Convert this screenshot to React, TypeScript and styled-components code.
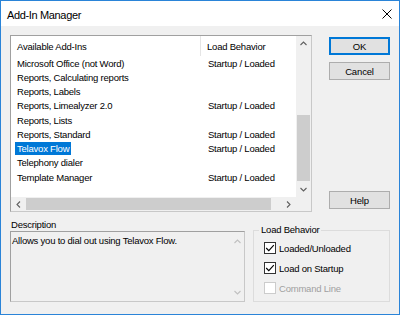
import styled, { createGlobalStyle } from "styled-components";

const GlobalStyle = createGlobalStyle`
  html, body {
    margin: 0;
    padding: 0;
    background: #ffffff;
  }
  * {
    box-sizing: border-box;
  }
`;

const Window = styled.div`
  width: 400px;
  height: 315px;
  border: 1px solid #2a84d8;
  display: flex;
  flex-direction: column;
  font-family: "Liberation Sans", Arial, sans-serif;
  font-size: 9.5px;
  letter-spacing: -0.22px;
  color: #000;
  background: #f0f0f0;
`;

const TitleBar = styled.div`
  height: 25px;
  flex: none;
  background: #ffffff;
  display: flex;
  align-items: center;
  justify-content: space-between;
  padding: 0 7px 0 6px;
`;

const Title = styled.span`
  font-size: 11px;
  letter-spacing: -0.35px;
  padding-top: 2px;
`;

const Body = styled.div`
  flex: 1;
  display: flex;
  flex-direction: column;
  padding: 9px 9px 12px 9px;
`;

const TopRow = styled.div`
  display: flex;
  gap: 17px;
  height: 177px;
`;

const ListBox = styled.div`
  width: 302px;
  height: 177px;
  background: #ffffff;
  border-top: 1px solid #a0a0a0;
  border-left: 1px solid #a0a0a0;
  border-right: 1px solid #c8c8c8;
  border-bottom: 1px solid #c8c8c8;
  display: grid;
  grid-template-columns: 1fr 15px;
  grid-template-rows: 1fr 14px;
`;

const ListContent = styled.div`
  overflow: hidden;
`;

const HeaderRow = styled.div`
  height: 20px;
  display: grid;
  grid-template-columns: 190px 1fr;
`;

const HeaderCell = styled.div<{ $divider?: boolean }>`
  display: flex;
  align-items: center;
  padding-left: 6px;
  border-right: ${(p) => (p.$divider ? "1px solid #e5e5e5" : "none")};
`;

const Row = styled.div`
  height: 14.25px;
  display: grid;
  grid-template-columns: 190px 1fr;
  align-items: center;
`;

const NameCell = styled.div`
  padding-left: 4px;
  white-space: nowrap;
`;

const NameText = styled.span<{ $selected?: boolean }>`
  display: inline-block;
  padding: 0 2px;
  line-height: 13px;
  background: ${(p) => (p.$selected ? "#0078d7" : "transparent")};
  color: ${(p) => (p.$selected ? "#ffffff" : "#000000")};
`;

const BehaviorCell = styled.div`
  padding-left: 7px;
  white-space: nowrap;
`;

const VScroll = styled.div`
  display: flex;
  flex-direction: column;
  background: #f0f0f0;
`;

const HScroll = styled.div`
  display: flex;
  background: #f0f0f0;
`;

const Corner = styled.div`
  background: #f0f0f0;
`;

const ArrowBox = styled.div<{ $horizontal?: boolean }>`
  flex: none;
  width: ${(p) => (p.$horizontal ? "15px" : "100%")};
  height: ${(p) => (p.$horizontal ? "100%" : "15px")};
  display: flex;
  align-items: center;
  justify-content: center;
`;

const Track = styled.div<{ $horizontal?: boolean }>`
  flex: 1;
  display: flex;
  flex-direction: ${(p) => (p.$horizontal ? "row" : "column")};
`;

const Thumb = styled.div<{ $horizontal?: boolean; $offset: number; $size: number }>`
  background: #cdcdcd;
  flex: none;
  ${(p) =>
    p.$horizontal
      ? `width: ${p.$size}px; margin-left: ${p.$offset}px; margin-top: 1px; margin-bottom: 1px;`
      : `height: ${p.$size}px; margin-top: ${p.$offset}px; margin-left: 1px; margin-right: 1px;`}
`;

const ButtonColumn = styled.div`
  width: 61px;
  display: flex;
  flex-direction: column;
  gap: 7px;
  padding: 2px 0 3px;
`;

const Button = styled.button<{ $default?: boolean }>`
  height: 18px;
  width: 100%;
  padding: 0;
  font-family: "Liberation Sans", Arial, sans-serif;
  font-size: 9.5px;
  letter-spacing: -0.15px;
  color: #000;
  background: #e1e1e1;
  border: 1px solid ${(p) => (p.$default ? "#0078d7" : "#adadad")};
  box-shadow: ${(p) => (p.$default ? "inset 0 0 0 1px #0078d7" : "none")};
`;

const Spacer = styled.div`
  flex: 1;
`;

const BottomRow = styled.div`
  display: flex;
  gap: 8px;
  margin-top: 7px;
  flex: 1;
`;

const DescriptionBlock = styled.div`
  width: 235px;
  display: flex;
  flex-direction: column;
`;

const SectionLabel = styled.div`
  height: 12px;
  line-height: 12px;
  padding-left: 1px;
`;

const DescriptionBox = styled.div`
  flex: 1;
  display: flex;
  background: #f0f0f0;
  border-top: 1px solid #a0a0a0;
  border-left: 1px solid #a0a0a0;
  border-right: 1px solid #c8c8c8;
  border-bottom: 1px solid #c8c8c8;
`;

const DescriptionText = styled.div`
  flex: 1;
  padding: 3px 1px;
  line-height: 11px;
`;

const DescScroll = styled.div`
  width: 14px;
  display: flex;
  flex-direction: column;
  justify-content: space-between;
  padding: 2px 0 1px;
`;

const GroupBox = styled.fieldset`
  flex: 1;
  min-width: 0;
  margin: 5px 0 0;
  padding: 2px 0 0 10px;
  border: 1px solid #dcdcdc;
`;

const Legend = styled.legend`
  margin-left: -5px;
  padding: 0 2px;
  line-height: 12px;
`;

const CheckRow = styled.label<{ $disabled?: boolean }>`
  height: 20px;
  display: flex;
  align-items: center;
  gap: 3px;
  color: ${(p) => (p.$disabled ? "#a0a0a0" : "#000")};
`;

const CheckBox = styled.span<{ $disabled?: boolean }>`
  width: 12px;
  height: 12px;
  flex: none;
  display: flex;
  align-items: center;
  justify-content: center;
  background: #ffffff;
  border: 1px solid ${(p) => (p.$disabled ? "#cccccc" : "#333333")};
`;

type Dir = "up" | "down" | "left" | "right";

const arrowPoints: Record<Dir, string> = {
  up: "0.5,4 3.5,1 6.5,4",
  down: "0.5,1 3.5,4 6.5,1",
  left: "4,0.5 1,3.5 4,6.5",
  right: "1,0.5 4,3.5 1,6.5",
};

const Arrow = ({ dir, muted }: { dir: Dir; muted?: boolean }) => {
  const vertical = dir === "up" || dir === "down";
  return (
    <svg width={vertical ? 7 : 5} height={vertical ? 5 : 7} viewBox={vertical ? "0 0 7 5" : "0 0 5 7"}>
      <polyline
        points={arrowPoints[dir]}
        fill="none"
        stroke={muted ? "#c0c0c0" : "#606060"}
        strokeWidth="1.1"
      />
    </svg>
  );
};

const CloseIcon = () => (
  <svg width="10" height="10" viewBox="0 0 10 10">
    <path d="M0.5 0.5 L9.5 9.5 M9.5 0.5 L0.5 9.5" stroke="#000" strokeWidth="1" />
  </svg>
);

const CheckMark = () => (
  <svg width="10" height="10" viewBox="0 0 10 10">
    <polyline points="1.2,5 3.8,7.6 8.8,2.2" fill="none" stroke="#000" strokeWidth="1.1" />
  </svg>
);

const addIns = [
  { name: "Microsoft Office (not Word)", behavior: "Startup / Loaded" },
  { name: "Reports, Calculating reports", behavior: "" },
  { name: "Reports, Labels", behavior: "" },
  { name: "Reports, Limealyzer 2.0", behavior: "Startup / Loaded" },
  { name: "Reports, Lists", behavior: "" },
  { name: "Reports, Standard", behavior: "Startup / Loaded" },
  { name: "Telavox Flow", behavior: "Startup / Loaded", selected: true },
  { name: "Telephony dialer", behavior: "" },
  { name: "Template Manager", behavior: "Startup / Loaded" },
];

const options = [
  { label: "Loaded/Unloaded", checked: true },
  { label: "Load on Startup", checked: true },
  { label: "Command Line", checked: false, disabled: true },
];

export default function App() {
  return (
    <>
      <GlobalStyle />
      <Window>
        <TitleBar>
          <Title>Add-In Manager</Title>
          <CloseIcon />
        </TitleBar>
        <Body>
          <TopRow>
            <ListBox>
              <ListContent>
                <HeaderRow>
                  <HeaderCell $divider>Available Add-Ins</HeaderCell>
                  <HeaderCell>Load Behavior</HeaderCell>
                </HeaderRow>
                {addIns.map((item) => (
                  <Row key={item.name}>
                    <NameCell>
                      <NameText $selected={item.selected}>{item.name}</NameText>
                    </NameCell>
                    <BehaviorCell>{item.behavior}</BehaviorCell>
                  </Row>
                ))}
              </ListContent>
              <VScroll>
                <ArrowBox>
                  <Arrow dir="up" />
                </ArrowBox>
                <Track>
                  <Thumb $offset={64} $size={66} />
                </Track>
                <ArrowBox>
                  <Arrow dir="down" />
                </ArrowBox>
              </VScroll>
              <HScroll>
                <ArrowBox $horizontal>
                  <Arrow dir="left" />
                </ArrowBox>
                <Track $horizontal>
                  <Thumb $horizontal $offset={0} $size={245} />
                </Track>
                <ArrowBox $horizontal>
                  <Arrow dir="right" />
                </ArrowBox>
              </HScroll>
              <Corner />
            </ListBox>
            <ButtonColumn>
              <Button $default>OK</Button>
              <Button>Cancel</Button>
              <Spacer />
              <Button>Help</Button>
            </ButtonColumn>
          </TopRow>
          <BottomRow>
            <DescriptionBlock>
              <SectionLabel>Description</SectionLabel>
              <DescriptionBox>
                <DescriptionText>Allows you to dial out using Telavox Flow.</DescriptionText>
                <DescScroll>
                  <ArrowBox>
                    <Arrow dir="up" muted />
                  </ArrowBox>
                  <ArrowBox>
                    <Arrow dir="down" muted />
                  </ArrowBox>
                </DescScroll>
              </DescriptionBox>
            </DescriptionBlock>
            <GroupBox>
              <Legend>Load Behavior</Legend>
              {options.map((opt) => (
                <CheckRow key={opt.label} $disabled={opt.disabled}>
                  <CheckBox $disabled={opt.disabled}>{opt.checked && <CheckMark />}</CheckBox>
                  {opt.label}
                </CheckRow>
              ))}
            </GroupBox>
          </BottomRow>
        </Body>
      </Window>
    </>
  );
}
